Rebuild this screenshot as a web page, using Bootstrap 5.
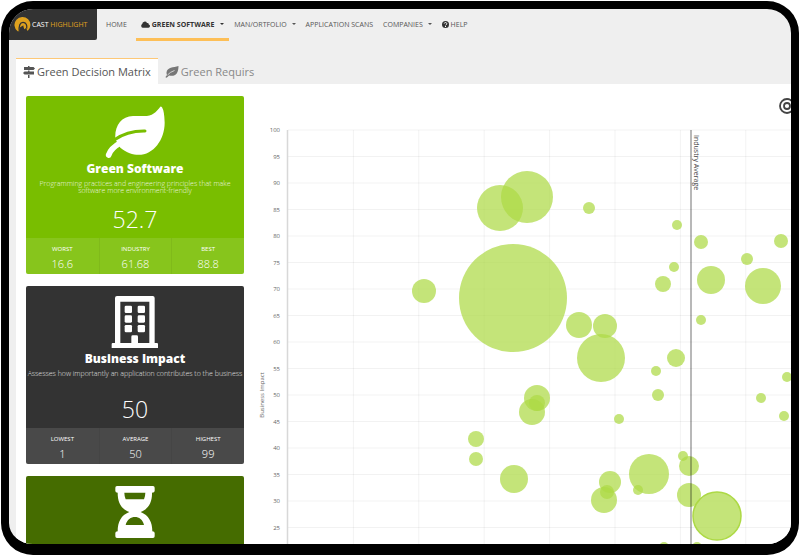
<!DOCTYPE html>
<html lang="en">
<head>
<meta charset="utf-8">
<meta name="viewport" content="width=device-width, initial-scale=1">
<title>CAST Highlight – Green Decision Matrix</title>
<link href="https://cdn.jsdelivr.net/npm/bootstrap@5.3.0/dist/css/bootstrap.min.css" rel="stylesheet">
<style>
  body { font-family: "Open Sans", sans-serif; font-size: 7px; line-height: 1; color: #555; background: #fff; padding: 1px; height: 100vh; }
  .device { border: solid #000; border-width: 8px 8px 11px; border-radius: 32px; background: #efefef; }
  .top-bar { height: 32px; }
  .brand { width: 88px; height: 31px; background: #333; color: #fff; font-size: 7px; border-radius: 0 0 2px 0; padding-left: 5px; gap: 1px; }
  .brand span span { color: #e0a21e; }
  .menu-link { color: #555; text-decoration: none; white-space: nowrap; padding: 1px 5px 0; border-bottom: 3px solid transparent; }
  .menu-link.current { color: #333; font-weight: 700; border-color: #fdbf57; gap: 2px; }
  .menu-link .caret { margin-left: 5px; border: 2px solid transparent; border-top-color: currentColor; border-bottom: 0; }
  .menu-link.current .caret { margin-left: 4px; }
  .tab-strip { margin: 17px 0 0 7px; font-size: 11px; }
  .tab-btn { border: 0; border-top: 1px solid transparent; background: none; color: #888; height: 26px; padding: 0 7px; gap: 2px; white-space: nowrap; }
  .tab-btn.current { background: #fff; color: #555; border-color: #fdc877; }
  .workspace { margin-left: 7px; background: #fff; }
  .score-column { width: 228px; padding: 12px 0 0 10px; gap: 12px; }
  .score { color: #fff; border-radius: 2px; height: 178px; }
  .score h2 { font-size: 12px; line-height: 14px; font-weight: 800; margin: 4px 0 0; }
  .score p { font-size: 7px; line-height: 7px; font-weight: 300; min-height: 14px; margin: 4px 0 0; opacity: .85; }
  .score output { font-size: 23px; line-height: 24px; font-weight: 300; margin: auto 0 7px; }
  .score .glyph { width: 60px; height: 52px; margin-top: 10px; }
  .score dl { height: 36px; background: rgba(255,255,255,.11); font-weight: 400; }
  .score dl > div + div { border-left: 1px solid rgba(0,0,0,.05); }
  .score dt { font-size: 6px; line-height: 8px; font-weight: 400; margin-top: 7px; }
  .score dd { font-size: 11px; line-height: 12px; margin: 5px 0 0; font-weight: 300; }
  .tone-green { background: #79be00; }
  .tone-dark { background: #333; }
  .tone-forest { background: #456c00; }
  .chart-area { padding-left: 10px; }
  .chart text { font-size: 6px; fill: #666; }
  .chart .average-label { font-size: 7px; fill: #444; }
</style>
<script src="https://cdn.jsdelivr.net/npm/bootstrap@5.3.0/dist/js/bootstrap.bundle.min.js"></script>
</head>
<body>
<div class="device h-100 overflow-hidden d-flex flex-column">
  <header class="top-bar d-flex flex-shrink-0">
    <a href="#" class="brand d-flex align-items-center text-decoration-none me-1">
      <svg width="17" height="17" viewBox="0 0 51 51" aria-hidden="true"><path d="M11 46A24 24 0 1 1 41 45L36 36 31 40 27 30 19 34 17 46z" fill="#e0a21e"/><path d="M16 47C14 29 18 19 27 19 36 19 40 28 38 38" fill="none" stroke="#333" stroke-width="4"/><path d="M28 28L18 35V49H32L28 41z" fill="#333"/></svg>
      <span>CAST <span>HIGHLIGHT</span></span>
    </a>
    <nav class="d-flex" aria-label="Main">
      <a href="#" class="menu-link d-flex align-items-center">HOME</a>
      <a href="#" class="menu-link current d-flex align-items-center ms-1"><svg width="9" height="7" viewBox="0 0 18 13" aria-hidden="true"><path d="M4 13a4 4 0 0 1-1.500-7.500A5 5 0 0 1 12 3.500a3 3 0 0 1 3.500 3A3.300 3.300 0 0 1 15 13z" fill="#333"/></svg>GREEN SOFTWARE<span class="caret"></span></a>
      <a href="#" class="menu-link d-flex align-items-center">MAN/ORTFOLIO<span class="caret"></span></a>
      <a href="#" class="menu-link d-flex align-items-center">APPLICATION SCANS</a>
      <a href="#" class="menu-link d-flex align-items-center">COMPANIES<span class="caret"></span></a>
      <a href="#" class="menu-link d-flex align-items-center"><svg width="7" height="7" viewBox="0 0 14 14" aria-hidden="true"><circle cx="7" cy="7" r="7" fill="#333"/><path d="M4.500 5Q5 3 7 3T9.500 5 7 8.500M7 10v2" fill="none" stroke="#fff" stroke-width="2"/></svg>&nbsp;HELP</a>
    </nav>
  </header>
  <div class="tab-strip d-flex flex-shrink-0" role="tablist">
    <button type="button" role="tab" aria-selected="true" class="tab-btn current d-flex align-items-center"><svg width="12" height="12" viewBox="0 0 24 24" aria-hidden="true"><path d="M10 0h3v2h8l3 3-3 3H2V2h8zM10 9h3v2h9v6H3l-3-3 3-3h7zM10 18h3v6h-3z" fill="#555"/></svg>Green Decision Matrix</button>
    <button type="button" role="tab" aria-selected="false" class="tab-btn d-flex align-items-center"><svg width="14" height="12" viewBox="0 0 28 24" aria-hidden="true"><path d="M27 0C17 3 4 2 3 13Q3 16 4 18L1 22Q2 25 5 22L8 19C20 22 27 16 27 0z" fill="#777"/><path d="M5 18Q10 12 19 9" fill="none" stroke="#efefef" stroke-width="1.500"/></svg>Green Requirs</button>
  </div>
  <main class="workspace d-flex flex-grow-1 overflow-hidden">
    <div class="score-column d-flex flex-column flex-shrink-0">
      <section class="score tone-green d-flex flex-column align-items-center text-center flex-shrink-0 overflow-hidden">
        <svg class="glyph" viewBox="314 60 180 156" aria-hidden="true"><path d="M480 62C467 79 456 90 431 90H398C362 92 342 119 345 160L360 185C430 240 493 180 493 110Q492 75 485 64Q482 60 480 62z" fill="#fff"/><path d="M341 162Q381 134 434 135" stroke="#79be00" stroke-width="9" stroke-linecap="round" fill="none"/><path d="M325 207Q332 186 360 171" stroke="#fff" stroke-width="17" stroke-linecap="round" fill="none"/></svg>
        <h2>Green Software</h2>
        <p class="px-2">Programming practices and engineering principles that make software more environment-friendly</p>
        <output>52.7</output>
        <dl class="d-flex w-100 mb-0"><div class="col-4"><dt>WORST</dt><dd>16.6</dd></div><div class="col-4"><dt>INDUSTRY</dt><dd>61.68</dd></div><div class="col-4"><dt>BEST</dt><dd>88.8</dd></div></dl>
      </section>
      <section class="score tone-dark d-flex flex-column align-items-center text-center flex-shrink-0 overflow-hidden">
        <svg class="glyph" viewBox="314 48 180 156" aria-hidden="true"><path fill="#fff" fill-rule="evenodd" d="M350 48H457Q463 48 463 54V189H470Q473 189 473 193V204H334V193Q334 189 337 189H344V54Q344 48 350 48zM360 65V189H393V170Q393 166 397 166H409Q413 166 413 170V189H447V65z"/><g fill="#fff"><rect x="373" y="77" width="22" height="22" rx="4"/><rect x="412" y="77" width="22" height="22" rx="4"/><rect x="373" y="106" width="22" height="22" rx="4"/><rect x="412" y="106" width="22" height="22" rx="4"/><rect x="373" y="135" width="22" height="22" rx="4"/><rect x="412" y="135" width="22" height="22" rx="4"/></g></svg>
        <h2>Business Impact</h2>
        <p class="text-nowrap">Assesses how importantly an application contributes to the business</p>
        <output>50</output>
        <dl class="d-flex w-100 mb-0"><div class="col-4"><dt>LOWEST</dt><dd>1</dd></div><div class="col-4"><dt>AVERAGE</dt><dd>50</dd></div><div class="col-4"><dt>HIGHEST</dt><dd>99</dd></div></dl>
      </section>
      <section class="score tone-forest d-flex flex-column align-items-center flex-shrink-0">
        <svg class="glyph" viewBox="314 618 180 156" aria-hidden="true"><path fill="#fff" fill-rule="evenodd" d="M350 618H458Q463 618 463 623V633Q463 638 455 638C456 666 445 687 421 696 445 706 456 726 456 754Q463 754 463 759V769Q463 774 458 774H350Q345 774 345 769V759Q345 754 352 754C352 726 362 706 387 696 362 687 352 666 352 638Q345 638 345 633V623Q345 618 350 618zM372 638Q372 648 376 658H431Q435 648 435 638zM376 735H431C424 703 384 703 376 735z"/></svg>
      </section>
    </div>
    <div class="chart-area flex-grow-1 overflow-hidden">
      <svg id="matrix" class="chart d-block w-100 h-100" viewBox="-34 -46 537 460" preserveAspectRatio="xMinYMin slice" role="img" aria-label="Applications by business impact">
        <g id="grid" stroke="#000" stroke-opacity=".05"></g>
        <path d="M-.500 0V430" stroke="#d8d8d8" stroke-width="1.500"/>
        <g id="ticks" text-anchor="end"></g>
        <text transform="translate(-24 265) rotate(-90)" text-anchor="middle">Business Impact</text>
        <g id="bubbles" fill="#add945" fill-opacity=".72"></g>
        <path d="M403 0V430" stroke="#000" stroke-opacity=".28" stroke-width="2"/>
        <text class="average-label" transform="translate(406 5) rotate(90)">Industry Average</text>
        <g fill="none" stroke="#444" stroke-width="1.800"><circle cx="499" cy="-24" r="7"/><circle cx="499" cy="-24" r="3"/></g>
      </svg>
    </div>
  </main>
</div>
<script>
  const NS = 'http://www.w3.org/2000/svg';
  const add = (id, tag, attrs, text) => {
    const el = document.createElementNS(NS, tag);
    for (const k in attrs) el.setAttribute(k, attrs[k]);
    if (text !== undefined) el.textContent = text;
    document.getElementById(id).appendChild(el);
  };
  // One horizontal line and label for every five points
  for (let v = 100; v >= 25; v -= 5) {
    const y = (100 - v) * 5.3;
    add('grid', 'path', { d: `M0 ${y}H2000` });
    add('ticks', 'text', { x: -8, y: y + 2 }, v);
  }
  for (let x = 65.4; x < 2000; x += 65.4) add('grid', 'path', { d: `M${x} 0V430` });
  // centre x, centre y, radius
  [[212,78,23],[239,67,26],[136,161,12],[225,168,54],[301,78,6],[389,95,5],[413,112,7],[493,111,7],[459,129,6],[386,137,5],
   [375,154,8],[423,150,14],[475,156,18],[413,190,5],[291,195,13],[317,196,12],[313,228,24],[388,228,9],[368,241,5],[370,265,6],
   [331,289,5],[499,247,5],[473,268,5],[496,286,5],[249,268,13],[249,273,8],[244,282,13],[188,309,8],[188,329,7],[226,349,14],
   [361,344,20],[350,360,5],[322,352,11],[319,362,7],[316,370,13],[395,326,5],[401,336,10],[401,365,12],[376,417,5],[409,417,5]]
    .forEach(([cx, cy, r]) => add('bubbles', 'circle', { cx, cy, r }));
  add('bubbles', 'circle', { cx: 429, cy: 386, r: 24, stroke: '#add945', 'stroke-width': 1.5 });
</script>
</body>
</html>
